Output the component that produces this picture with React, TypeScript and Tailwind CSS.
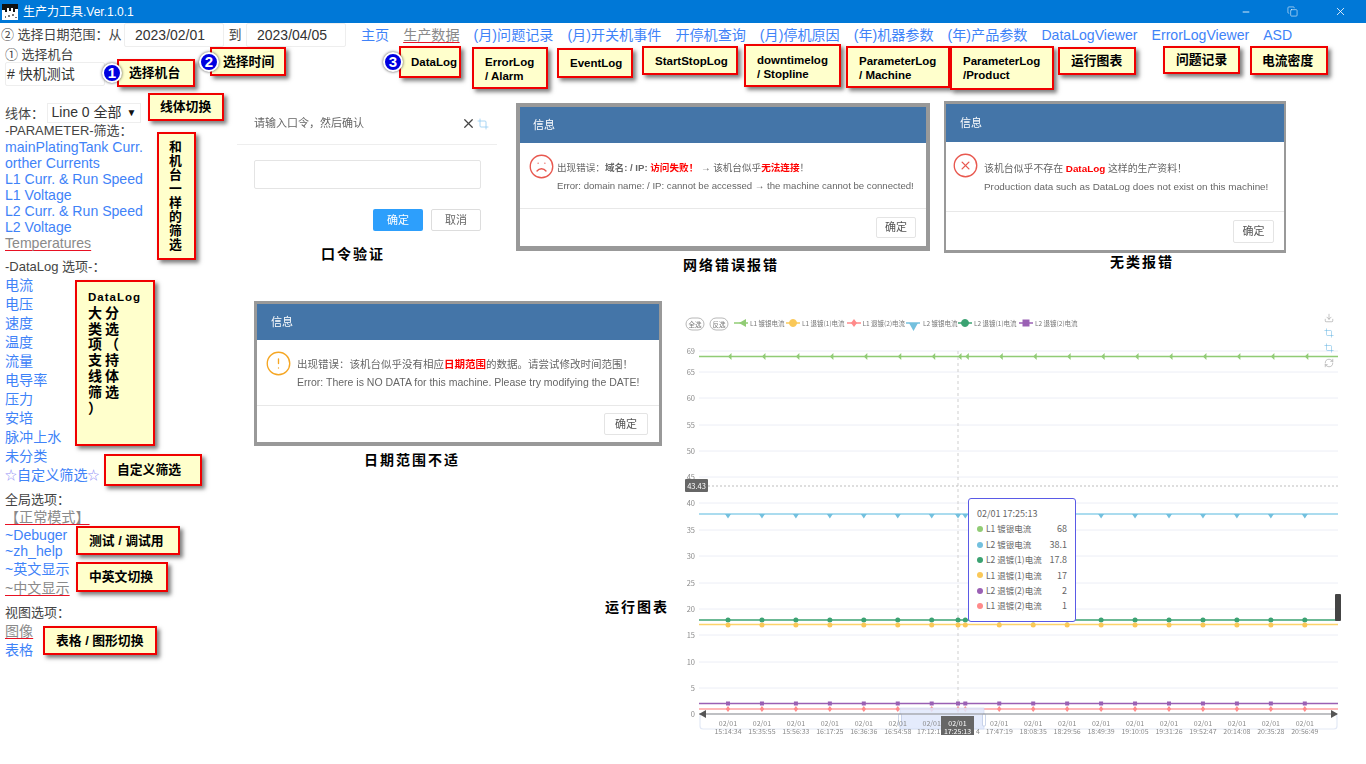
import { FC, ReactNode } from "react";
import { CircleAlert, CircleX, Copy, Crop, Download, Frown, Minus, RefreshCw, X } from "lucide-react";

const navLinks = ["主页", "生产数据", "(月)问题记录", "(月)开关机事件", "开停机查询", "(月)停机原因", "(年)机器参数", "(年)产品参数", "DataLogViewer", "ErrorLogViewer", "ASD"];
const paramLinks = ["mainPlatingTank Curr.", "orther Currents", "L1 Curr. & Run Speed", "L1 Voltage", "L2 Curr. & Run Speed", "L2 Voltage", "Temperatures"];
const dataLinks = ["电流", "电压", "速度", "温度", "流量", "电导率", "压力", "安培", "脉冲上水", "未分类"];

const TextLink: FC<{ label: ReactNode; active?: boolean; cjk?: boolean }> = ({ label, active, cjk }) => (
  <a
    className={`block w-fit whitespace-nowrap text-[14.1px] ${cjk ? "leading-[19px]" : "leading-[16px]"} ${
      active
        ? "text-[#8a8a8a] underline decoration-[#e81123] underline-offset-2 [text-decoration-skip-ink:none]"
        : "text-[#3f83f8]"
    }`}
  >
    {label}
  </a>
);

const Callout: FC<{ className: string; cjk?: boolean; children: ReactNode }> = ({ className, cjk, children }) => (
  <div
    className={`absolute z-10 border-2 border-[#f00000] bg-[#ffffcc] font-bold leading-[14px] text-black shadow-[3px_3px_4px_rgba(0,0,0,0.5)] ${
      cjk ? "text-[12.8px]" : "text-[11.5px]"
    } ${className}`}
  >
    {children}
  </div>
);

const Badge: FC<{ className: string; n: number }> = ({ className, n }) => (
  <div
    className={`absolute z-20 flex h-[20px] w-[20px] items-center justify-center rounded-full border-2 border-white bg-[#0000e0] text-[15px] font-bold text-white shadow-[0_0_3px_rgba(0,0,0,0.7)] ${className}`}
  >
    {n}
  </div>
);

const Caption: FC<{ className: string; children: ReactNode }> = ({ className, children }) => (
  <div className={`absolute whitespace-nowrap text-[14px] font-bold leading-[16px] tracking-[2px] text-black ${className}`}>{children}</div>
);

const InfoModal: FC<{
  className: string;
  headerClass: string;
  bodyClass: string;
  textClass: string;
  footerClass: string;
  buttonClass: string;
  icon: ReactNode;
  children: ReactNode;
}> = ({ className, headerClass, bodyClass, textClass, footerClass, buttonClass, icon, children }) => (
  <div className={`absolute flex flex-col border-[#999999] bg-white text-[#666666] blur-[0.3px] ${className}`}>
    <div className={`flex shrink-0 items-center bg-[#4475a8] text-[11px] text-white ${headerClass}`}>信息</div>
    <div className={`flex flex-1 pt-[10px] ${bodyClass}`}>
      {icon}
      <div className={`whitespace-nowrap leading-[18px] ${textClass}`}>{children}</div>
    </div>
    <div className={`flex shrink-0 items-center justify-end border-t border-[#e8e8e8] ${footerClass}`}>
      <div className={`flex items-center justify-center rounded-[2px] border border-[#e4e4e4] text-[11px] text-[#555555] ${buttonClass}`}>确定</div>
    </div>
  </div>
);

const Red: FC<{ children: ReactNode }> = ({ children }) => <b className="text-[#ff0000]">{children}</b>;

const beforeX = [0, 1, 2, 3, 4, 5, 6].map((i) => 728 + 33.95 * i);
const afterX = [0, 1, 2, 3, 4, 5, 6, 7, 8, 9, 10].map((i) => 965.3 + 33.95 * i);
const pointX = [...beforeX, 958, ...afterX];
const times = ["15:14:34", "15:35:55", "15:56:33", "16:17:25", "16:36:36", "16:54:58"];
const timesAfter = ["17:47:19", "18:08:35", "18:29:56", "18:49:39", "19:10:05", "19:31:26", "19:52:47", "20:14:08", "20:35:28", "20:56:49"];
const gridLines: [number, number][] = [[69, 351], [65, 372], [60, 398], [55, 425], [50, 451], [45, 477], [40, 503], [35, 530], [30, 556], [25, 583], [20, 609], [15, 635], [10, 662], [5, 688]];
const legend = [
  { name: "L1 镀银电流", x: 734, tx: 750, c: "#91cc75", d: "M739 323l7 -4v8z" },
  { name: "L1 退镀(1)电流", x: 786, tx: 802, c: "#fac858", d: "M793 319a4 4 0 1 0 .01 0z" },
  { name: "L1 退镀(2)电流", x: 847, tx: 862.5, c: "#ff8a8a", d: "M854 319l3 4l-3 4l-3 -4z" },
  { name: "L2 镀银电流", x: 906, tx: 923, c: "#73c0de", d: "M909 323h9l-4.5 8z" },
  { name: "L2 退镀(1)电流", x: 958, tx: 974, c: "#3ba272", d: "M965 319a4 4 0 1 0 .01 0z" },
  { name: "L2 退镀(2)电流", x: 1019, tx: 1035, c: "#9a60b4", d: "M1022.5 319.5h7v7h-7z" },
];
const tipRows = [
  { name: "L1 镀银电流", v: "68", c: "#91cc75" },
  { name: "L2 镀银电流", v: "38.1", c: "#73c0de" },
  { name: "L2 退镀(1)电流", v: "17.8", c: "#3ba272" },
  { name: "L1 退镀(1)电流", v: "17", c: "#fac858" },
  { name: "L2 退镀(2)电流", v: "2", c: "#9a60b4" },
  { name: "L1 退镀(2)电流", v: "1", c: "#ff8a8a" },
];

const RunChart: FC = () => (
  <svg className="absolute left-[680px] top-[305px] h-[430px] w-[670px] blur-[0.3px]" viewBox="680 305 670 430" fontFamily="'Noto Sans CJK SC', sans-serif">
    {gridLines.map(([v, y]) => (
      <g key={v}>
        <line x1={699} x2={1338} y1={y} y2={y} stroke="#eceef6" />
        <text x={695} y={y + 3} textAnchor="end" fontSize={7.5} fill="#8a8a8a">{v}</text>
      </g>
    ))}
    <text x={695} y={717} textAnchor="end" fontSize={7.5} fill="#8a8a8a">0</text>

    {/* legend */}
    <rect x={686} y={318} width={18} height={12} rx={6} fill="white" stroke="#999" strokeWidth={0.7} />
    <text x={695} y={327} textAnchor="middle" fontSize={6.5} fill="#777">全选</text>
    <rect x={710} y={318} width={18} height={12} rx={6} fill="white" stroke="#999" strokeWidth={0.7} />
    <text x={719} y={327} textAnchor="middle" fontSize={6.5} fill="#777">反选</text>
    {legend.map((l) => (
      <g key={l.name}>
        <line x1={l.x} x2={l.x + 14} y1={323} y2={323} stroke={l.c} strokeWidth={1.5} />
        <path d={l.d} fill={l.c} />
        <text x={l.tx} y={326} fontSize={6.5} fill="#777">{l.name}</text>
      </g>
    ))}

    {/* crosshair */}
    <line x1={958} x2={958} y1={351} y2={714} stroke="#cfcfcf" strokeDasharray="3 3" />
    <line x1={708} x2={1338} y1={486} y2={486} stroke="#bdbdbd" strokeDasharray="2 2" />

    {/* series */}
    <line x1={699} x2={1338} y1={356.5} y2={356.5} stroke="#91cc75" strokeWidth={1.6} />
    <line x1={699} x2={1338} y1={514} y2={514} stroke="#8fd0ea" strokeWidth={1.6} />
    <line x1={699} x2={1338} y1={620} y2={620} stroke="#3ba272" strokeWidth={1.6} />
    <line x1={699} x2={1338} y1={624.5} y2={624.5} stroke="#fdd36a" strokeWidth={1.6} />
    <line x1={699} x2={1338} y1={703.5} y2={703.5} stroke="#9a60b4" strokeWidth={1.6} />
    <line x1={699} x2={1338} y1={709} y2={709} stroke="#ffa0a0" strokeWidth={1.6} />
    {pointX.map((x) => (
      <g key={x}>
        <path d={`M${x} 356.5l3.5 -3.5v7z`} fill="#91cc75" />
        <path d={`M${x - 3} 514h6l-3 4.5z`} fill="#73c0de" />
        <circle cx={x} cy={620} r={2.5} fill="#3ba272" />
        <circle cx={x} cy={625} r={2.5} fill="#fac858" />
        <rect x={x - 2} y={701.5} width={4} height={4} fill="#9a60b4" />
        <path d={`M${x} 706l2.2 3l-2.2 3l-2.2 -3z`} fill="#ff8a8a" />
      </g>
    ))}

    {/* data zoom */}
    <rect x={700} y={714} width={637} height={15} rx={3} fill="white" stroke="#e3e9f6" strokeWidth={1.2} />
    <rect x={900} y={708} width={84} height={21} fill="#dfe8fb" fillOpacity={0.85} stroke="#cdd8ee" strokeWidth={0.6} />
    <rect x={898.5} y={714} width={3} height={12} rx={1} fill="white" stroke="#a9bbdc" strokeWidth={0.6} />
    <rect x={982.5} y={714} width={3} height={12} rx={1} fill="white" stroke="#a9bbdc" strokeWidth={0.6} />
    <line x1={699} x2={1337} y1={714} y2={714} stroke="#8d8d8d" strokeWidth={1.2} />
    <path d="M699 714l7 -4v8z" fill="#555" />
    <path d="M1338 714l-7 -4v8z" fill="#555" />
    <g fontSize={7} fill="#8a8a8a" textAnchor="middle">
      {times.map((t, i) => (
        <g key={t}>
          <text x={beforeX[i]} y={726}>02/01</text>
          <text x={beforeX[i]} y={734}>{t}</text>
        </g>
      ))}
      <text x={beforeX[6]} y={726}>02/01</text>
      <text x={917} y={734} textAnchor="start">17:12:1</text>
      <text x={976} y={734} textAnchor="start">4</text>
      {timesAfter.map((t, i) => (
        <g key={t}>
          <text x={afterX[i + 1]} y={726}>02/01</text>
          <text x={afterX[i + 1]} y={734}>{t}</text>
        </g>
      ))}
    </g>
    <rect x={941} y={716} width={33} height={19} fill="#666666" />
    <g fontSize={7} fill="white" textAnchor="middle">
      <text x={957.5} y={726}>02/01</text>
      <text x={957.5} y={734}>17:25:13</text>
    </g>

    <rect x={685} y={479} width={23} height={13} rx={1} fill="#666666" />
    <text x={696.5} y={488.5} textAnchor="middle" fontSize={7.5} fill="white">43.43</text>
    <rect x={1335} y={594} width={6} height={27} rx={1} fill="#444444" />
  </svg>
);

const ChartTooltip: FC = () => (
  <div className="absolute left-[968px] top-[498px] flex h-[124px] w-[108px] flex-col rounded-[3px] border border-[#5a5ae6] bg-white pl-[8px] pr-[8px] pt-[7px] font-['Noto_Sans_CJK_SC',sans-serif] text-[9px] leading-[15.4px] text-[#666666]">
    <div>02/01 17:25:13</div>
    {tipRows.map((row) => (
      <div key={row.name} className="flex items-center">
        <span className="mr-[3px] h-[6px] w-[6px] rounded-full" style={{ backgroundColor: row.c }} />
        <span className="flex-1 whitespace-nowrap text-[8.5px]">{row.name}</span>
        <span>{row.v}</span>
      </div>
    ))}
  </div>
);

const ToolboxIcons: FC = () => (
  <div className="absolute left-[1324px] top-[313px] flex flex-col gap-[5px]">
    <Download size={10} strokeWidth={1.2} className="text-[#888888]" />
    <Crop size={10} strokeWidth={1.2} className="text-[#5fb0e0]" />
    <Crop size={10} strokeWidth={1.2} className="text-[#5fb0e0]" />
    <RefreshCw size={10} strokeWidth={1.2} className="text-[#888888]" />
  </div>
);

export default function App() {
  return (
    <div className="relative h-[764px] w-[1366px] overflow-hidden bg-white font-['Liberation_Sans','Noto_Sans_CJK_SC',sans-serif] text-[13px] text-[#444444]">
      {/* title bar */}
      <div className="flex h-[23px] items-center bg-[#0078d7] pl-[2px] text-white">
        <svg width="16" height="16" viewBox="0 0 16 16" className="mr-[5px]">
          <rect width="16" height="16" fill="#fff" />
          <path d="M0 0h16v5h-3v3h-2V4H9v3H7V4H5v4H3V6H0z" fill="#111" />
          <path d="M6 11h2v2H6zM10 10h2v2h-2zM3 12h1v2H3zM13 13h2v1h-2z" fill="#777" />
        </svg>
        <span className="text-[12px]">生产力工具.Ver.1.0.1</span>
        <div className="ml-auto flex items-center gap-[36px] pr-[19px]">
          <Minus size={10} />
          <Copy size={11} strokeWidth={1.2} />
          <X size={13} strokeWidth={1.5} />
        </div>
      </div>

      {/* date range and nav */}
      <div className="flex h-[24px] items-center pl-[1px]">
        <span className="w-[123px] whitespace-nowrap">② 选择日期范围：从</span>
        <div className="flex h-[24px] w-[100px] items-center rounded-[2px] border border-[#eeeeee] pl-[10px] text-[14px] text-[#333333]">2023/02/01</div>
        <span className="w-[22px] text-center">到</span>
        <div className="flex h-[24px] w-[100px] items-center rounded-[2px] border border-[#eeeeee] pl-[10px] text-[14px] text-[#333333]">2023/04/05</div>
        <nav className="ml-[15px] flex items-center gap-[14px]">
          {navLinks.map((label) => (
            <TextLink key={label} label={label} active={label === "生产数据"} />
          ))}
        </nav>
      </div>

      {/* sidebar */}
      <aside className="flex w-[236px] flex-col pl-[5px]">
        <div className="leading-[16px]">① 选择机台</div>
        <div className="mt-[-1px] flex h-[24px] w-[100px] items-center rounded-[2px] border border-[#eeeeee] pl-[1px] text-[14px] text-[#333333]">
          # 快机测试
        </div>
        <div className="mt-[16px] flex h-[21px] items-center">
          <span className="w-[42px] pt-[3px]">线体：</span>
          <div className="flex h-[20px] w-[94px] items-center justify-center whitespace-nowrap border border-[#eeeeee] text-[14px] text-[#333333]">
            Line 0 全部 <span className="ml-[5px] text-[10px] text-[#111111]">▼</span>
          </div>
        </div>
        <div className="leading-[16px]">-PARAMETER-筛选：</div>
        {paramLinks.map((label) => (
          <TextLink key={label} label={label} active={label === "Temperatures"} />
        ))}
        <div className="mt-[8px] leading-[16px]">-DataLog 选项-：</div>
        <div className="mt-[1px]">
          {dataLinks.map((label) => (
            <TextLink key={label} label={label} cjk />
          ))}
        </div>
        <TextLink
          cjk
          label={
            <>
              <span className="text-[12px] text-[#8f8ff5]">☆</span>自定义筛选<span className="text-[12px] text-[#8f8ff5]">☆</span>
            </>
          }
        />
        <div className="mt-[5px] leading-[18px]">全局选项：</div>
        <TextLink label="【正常模式】" active />
        <div className="mt-[2px]">
          <TextLink label="~Debuger" />
        </div>
        <TextLink label="~zh_help" />
        <div className="mt-[1px]">
          <TextLink label="~英文显示" cjk />
        </div>
        <TextLink label="~中文显示" active cjk />
        <div className="mt-[6px] leading-[18px]">视图选项：</div>
        <TextLink label="图像" active cjk />
        <TextLink label="表格" cjk />
      </aside>

      {/* password dialog */}
      <div className="absolute left-[237px] top-[103px] h-[140px] w-[260px] bg-white text-[#666666] blur-[0.3px]">
        <div className="flex h-[42px] items-center border-b border-[#eeeeee] pl-[17px] pr-[8px] text-[11px]">
          <span>请输入口令，然后确认</span>
          <X size={15} className="ml-auto text-[#444444]" />
          <Crop size={12} strokeWidth={1.5} className="ml-[1px] text-[#8ec8f0]" />
        </div>
        <div className="ml-[17px] mt-[15px] h-[29px] w-[227px] rounded-[2px] border border-[#e4e4e4]" />
        <div className="mt-[20px] flex justify-end gap-[8px] pr-[16px] text-[11px]">
          <div className="flex h-[22px] w-[50px] items-center justify-center rounded-[2px] bg-[#2d9ffc] text-white">确定</div>
          <div className="flex h-[22px] w-[50px] items-center justify-center rounded-[2px] border border-[#dddddd]">取消</div>
        </div>
      </div>

      <InfoModal
        className="left-[516px] top-[103px] h-[148px] w-[414px] border-x-[4px] border-t-[4px] border-b-[5px]"
        headerClass="h-[36px] pl-[13px]"
        bodyClass="pl-[8px] gap-[2px]"
        textClass="mt-[6px] text-[9.6px]"
        footerClass="h-[38px] pr-[10px]"
        buttonClass="h-[21px] w-[40px]"
        icon={<Frown size={27} strokeWidth={1.2} className="shrink-0 text-[#e8584f]" />}
      >
        <div>
          出现错误：<b>域名: / IP:</b> <Red>访问失败！</Red> → 该机台似乎<Red>无法连接</Red>！
        </div>
        <div>Error: domain name: / IP: cannot be accessed → the machine cannot be connected!</div>
      </InfoModal>

      <InfoModal
        className="left-[944px] top-[101px] h-[152px] w-[342px] border-x-[2px] border-y-[3px]"
        headerClass="h-[38px] pl-[14px]"
        bodyClass="pl-[6px] gap-[5px]"
        textClass="mt-[8px] text-[9.9px]"
        footerClass="h-[39px] pr-[10px]"
        buttonClass="h-[23px] w-[41px]"
        icon={<CircleX size={27} strokeWidth={1.2} className="shrink-0 text-[#e8584f]" />}
      >
        <div>
          该机台似乎不存在 <Red>DataLog</Red> 这样的生产资料！
        </div>
        <div>Production data such as DataLog does not exist on this machine!</div>
      </InfoModal>

      <InfoModal
        className="left-[254px] top-[301px] h-[145px] w-[408px] border-[3px] border-b-[4px]"
        headerClass="h-[36px] pl-[14px]"
        bodyClass="pl-[8px] gap-[5px]"
        textClass="mt-[5px] text-[10.5px]"
        footerClass="h-[37px] pr-[11px]"
        buttonClass="h-[22px] w-[44px]"
        icon={<CircleAlert size={27} strokeWidth={1.2} className="shrink-0 text-[#f5a623]" />}
      >
        <div>
          出现错误：该机台似乎没有相应<Red>日期范围</Red>的数据。请尝试修改时间范围！
        </div>
        <div>Error: There is NO DATA for this machine. Please try modifying the DATE!</div>
      </InfoModal>

      <Caption className="left-[321px] top-[246px]">口令验证</Caption>
      <Caption className="left-[683px] top-[257px]">网络错误报错</Caption>
      <Caption className="left-[1110px] top-[254px]">无类报错</Caption>
      <Caption className="left-[364px] top-[452px]">日期范围不适</Caption>
      <Caption className="left-[605px] top-[599px]">运行图表</Caption>

      <RunChart />
      <ChartTooltip />
      <ToolboxIcons />

      {/* callouts */}
      <Badge className="left-[102px] top-[63px]" n={1} />
      <Badge className="left-[199px] top-[52px]" n={2} />
      <Badge className="left-[383px] top-[52px]" n={3} />

      <Callout cjk className="left-[117px] top-[59px] flex h-[28px] w-[78px] items-center pl-[10px]">选择机台</Callout>
      <Callout cjk className="left-[210px] top-[47px] flex h-[29px] w-[76px] items-center pl-[11px]">选择时间</Callout>
      <Callout cjk className="left-[148px] top-[93px] flex h-[28px] w-[76px] items-center pl-[10px]">线体切换</Callout>
      <Callout cjk className="left-[157px] top-[132px] h-[128px] w-[39px] px-[10px] pt-[6px]">和机台一样的筛选</Callout>
      <Callout className="left-[75px] top-[280px] h-[166px] w-[80px] pl-[11px] pt-[7px] text-[14px] leading-[15.8px] tracking-[3px]">
        <span className="text-[11.5px] tracking-[1px]">DataLog</span>
        <br />
        大分
        <br />
        类选
        <br />
        项（
        <br />
        支持
        <br />
        线体
        <br />
        筛选
        <br />）
      </Callout>
      <Callout cjk className="left-[104px] top-[454px] flex h-[32px] w-[98px] items-center pl-[11px]">自定义筛选</Callout>
      <Callout cjk className="left-[76px] top-[526px] flex h-[29px] w-[104px] items-center pl-[11px]">测试 / 调试用</Callout>
      <Callout cjk className="left-[76px] top-[562px] flex h-[30px] w-[92px] items-center pl-[11px]">中英文切换</Callout>
      <Callout cjk className="left-[43px] top-[626px] flex h-[29px] w-[114px] items-center pl-[11px]">表格 / 图形切换</Callout>

      <Callout className="left-[399px] top-[46px] flex h-[32px] w-[62px] items-center pl-[10px]">DataLog</Callout>
      <Callout className="left-[472px] top-[47px] h-[42px] w-[76px] pl-[11px] pt-[6px]">ErrorLog<br />/ Alarm</Callout>
      <Callout className="left-[557px] top-[48px] flex h-[30px] w-[76px] items-center pl-[11px]">EventLog</Callout>
      <Callout className="left-[642px] top-[46px] flex h-[29px] w-[96px] items-center pl-[11px]">StartStopLog</Callout>
      <Callout className="left-[744px] top-[44px] h-[43px] w-[97px] pl-[11px] pt-[7px]">downtimelog<br />/ Stopline</Callout>
      <Callout className="left-[846px] top-[46px] h-[42px] w-[104px] pl-[11px] pt-[6px]">ParameterLog<br />/ Machine</Callout>
      <Callout className="left-[950px] top-[46px] h-[44px] w-[104px] pl-[11px] pt-[6px]">ParameterLog<br />/Product</Callout>
      <Callout cjk className="left-[1058px] top-[47px] flex h-[28px] w-[78px] items-center pl-[11px]">运行图表</Callout>
      <Callout cjk className="left-[1163px] top-[46px] flex h-[28px] w-[77px] items-center pl-[11px]">问题记录</Callout>
      <Callout cjk className="left-[1250px] top-[46px] flex h-[29px] w-[78px] items-center pl-[10px]">电流密度</Callout>
    </div>
  );
}
